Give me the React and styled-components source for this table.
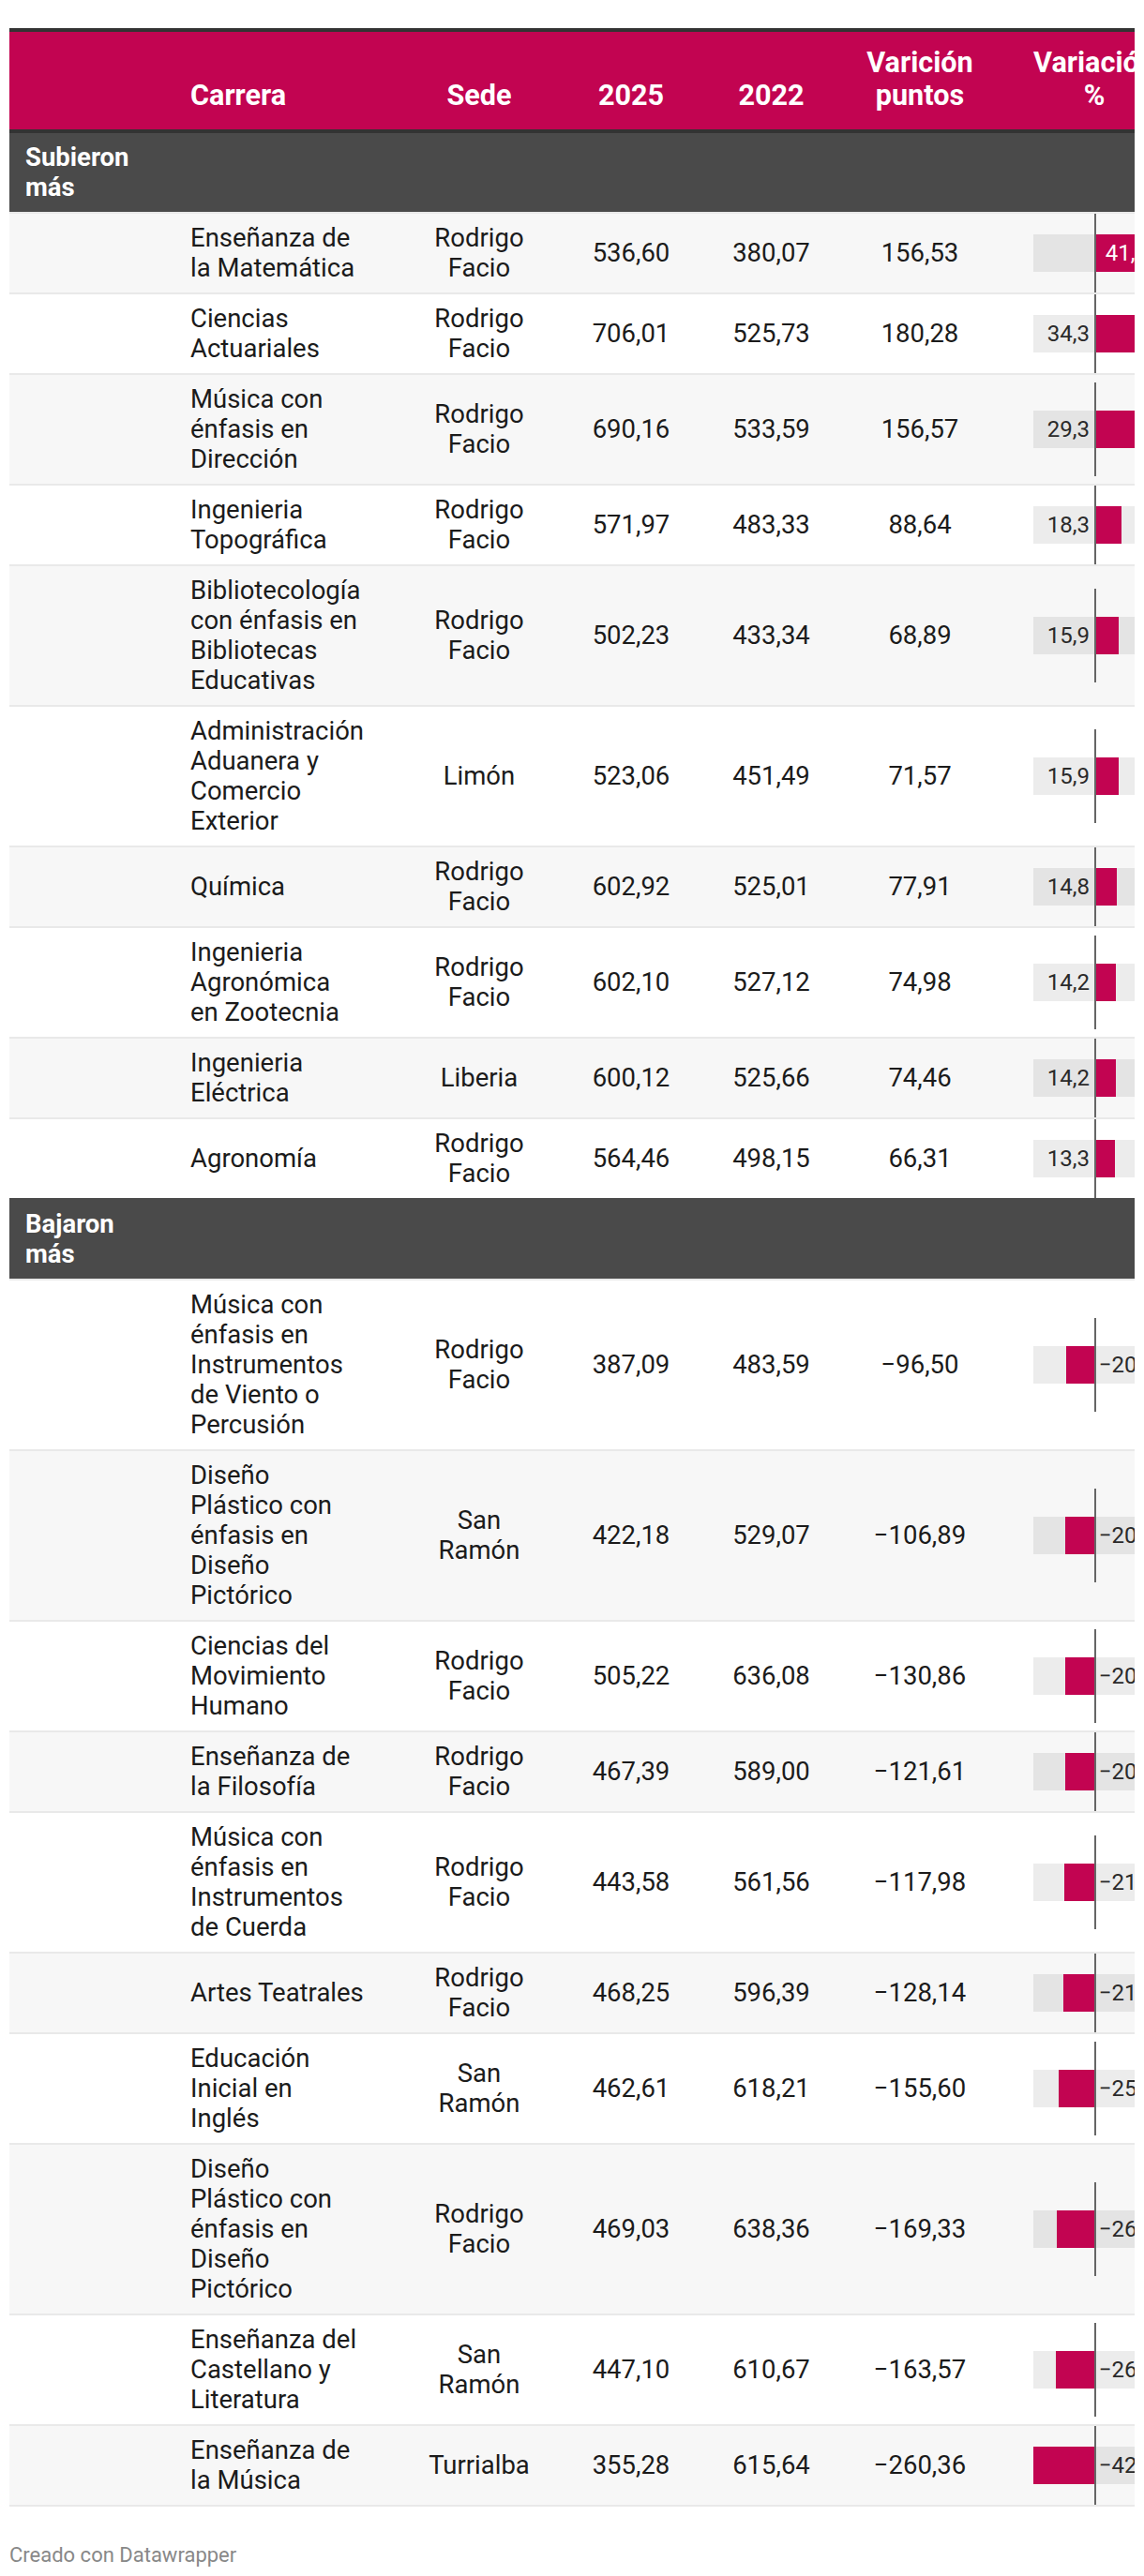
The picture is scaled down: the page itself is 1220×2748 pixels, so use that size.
import React from "react";
import styled, { createGlobalStyle } from "styled-components";

const GlobalStyle = createGlobalStyle`
  html, body { margin: 0; padding: 0; background: #ffffff; }
  body { font-family: Roboto, "Noto Sans", "Liberation Sans", sans-serif; color: #1d1d1d; }
`;

const PINK = "#c20451";
const SECTION = "#4a4a4a";
const STRIPE = "#f7f7f7";
const RULE = "#e9e9e9";

const MIN = -42.29;
const MAX = 41.18;
const RANGE = MAX - MIN;
const TRACK_W = 130;
const TRACK_PAD = 21;
const AXIS_PCT = ((0 - MIN) / RANGE) * 100;

const columns = [
  { w: 183, pad: "0 17px", align: "left" },
  { w: 247, pad: "0 50px 0 10px", align: "left" },
  { w: 142, pad: "0 6px", align: "center" },
  { w: 182, pad: "0 8px", align: "center" },
  { w: 117, pad: "0 4px", align: "center" },
  { w: 200, pad: "0 20px", align: "center" },
  { w: 172, pad: `0 ${TRACK_PAD}px`, align: "center" },
];

const subieron = [
  ["Enseñanza de la Matemática", "Rodrigo Facio", "536,60", "380,07", "156,53", 41.2],
  ["Ciencias Actuariales", "Rodrigo Facio", "706,01", "525,73", "180,28", 34.3],
  ["Música con énfasis en Dirección", "Rodrigo Facio", "690,16", "533,59", "156,57", 29.3],
  ["Ingenieria Topográfica", "Rodrigo Facio", "571,97", "483,33", "88,64", 18.3],
  ["Bibliotecología con énfasis en Bibliotecas Educativas", "Rodrigo Facio", "502,23", "433,34", "68,89", 15.9],
  ["Administración Aduanera y Comercio Exterior", "Limón", "523,06", "451,49", "71,57", 15.9],
  ["Química", "Rodrigo Facio", "602,92", "525,01", "77,91", 14.8],
  ["Ingenieria Agronómica en\u00A0Zootecnia", "Rodrigo Facio", "602,10", "527,12", "74,98", 14.2],
  ["Ingenieria Eléctrica", "Liberia", "600,12", "525,66", "74,46", 14.2],
  ["Agronomía", "Rodrigo Facio", "564,46", "498,15", "66,31", 13.3],
];

const bajaron = [
  ["Música con énfasis en Instrumentos de Viento o Percusión", "Rodrigo Facio", "387,09", "483,59", "−96,50", -20.0],
  ["Diseño Plástico con énfasis en Diseño Pictórico", "San Ramón", "422,18", "529,07", "−106,89", -20.2],
  ["Ciencias del Movimiento Humano", "Rodrigo Facio", "505,22", "636,08", "−130,86", -20.6],
  ["Enseñanza de la Filosofía", "Rodrigo Facio", "467,39", "589,00", "−121,61", -20.6],
  ["Música con énfasis en Instrumentos de Cuerda", "Rodrigo Facio", "443,58", "561,56", "−117,98", -21.0],
  ["Artes Teatrales", "Rodrigo Facio", "468,25", "596,39", "−128,14", -21.5],
  ["Educación Inicial en Inglés", "San Ramón", "462,61", "618,21", "−155,60", -25.2],
  ["Diseño Plástico con énfasis en Diseño Pictórico", "Rodrigo Facio", "469,03", "638,36", "−169,33", -26.5],
  ["Enseñanza del Castellano y Literatura", "San Ramón", "447,10", "610,67", "−163,57", -26.8],
  ["Enseñanza de la Música", "Turrialba", "355,28", "615,64", "−260,36", -42.3],
];

const Page = styled.div`
  padding: 30px 10px 0;
`;

const Frame = styled.div`
  width: 1200px;
  overflow: hidden;
`;

const Table = styled.table`
  width: 1243px;
  table-layout: fixed;
  border-collapse: separate;
  border-spacing: 0;
  font-size: 27.5px;
  line-height: 32px;
`;

const HeadCell = styled.th`
  background: ${PINK};
  color: #ffffff;
  font-weight: 700;
  font-size: 30.6px;
  line-height: 35px;
  text-align: ${(p) => p.$align};
  vertical-align: bottom;
  padding: ${(p) => p.$pad};
  padding-top: 15px;
  padding-bottom: 19px;
  border-top: 4px solid #333333;
  border-bottom: 4px solid #333333;
`;

const SectionCell = styled.td`
  background: ${SECTION};
  color: #ffffff;
  font-weight: 700;
  padding: 10px 17px;
  vertical-align: top;
  border-bottom: 2px solid ${RULE};
`;

const Cell = styled.td`
  background: ${(p) => (p.$stripe ? STRIPE : "#ffffff")};
  text-align: ${(p) => p.$align};
  vertical-align: middle;
  padding: ${(p) => p.$pad};
  padding-top: 10px;
  padding-bottom: 10px;
  border-bottom: 2px solid ${(p) => p.$rule};
  color: #1b1b1b;
`;

const BarCell = styled(Cell)`
  position: relative;
`;

const Axis = styled.div`
  position: absolute;
  top: 50%;
  transform: translateY(-50%);
  height: 100%;
  max-height: 100px;
  width: 2px;
  background: #666666;
  z-index: 2;
`;

const Track = styled.div`
  position: relative;
  height: 40px;
  background: rgba(0, 0, 0, 0.075);
`;

const Bar = styled.div`
  position: absolute;
  top: 0;
  bottom: 0;
  background: ${PINK};
`;

const BarLabel = styled.span`
  position: absolute;
  top: 0;
  font-size: 24px;
  line-height: 40px;
  white-space: nowrap;
  color: ${(p) => (p.$inside ? "#ffffff" : "#2a2a2a")};
  z-index: 3;
`;

const Footer = styled.div`
  margin-top: 39px;
  font-size: 22px;
  line-height: 26px;
  color: #888888;
`;

const fmt = (v) => {
  const s = Math.abs(v).toFixed(1).replace(".", ",");
  return v < 0 ? "−" + s : s;
};

function VariationBar({ value, stripe, rule }) {
  const widthPct = (Math.abs(value) / RANGE) * 100;
  const leftPct = value < 0 ? AXIS_PCT - widthPct : AXIS_PCT;
  const barPx = (Math.abs(value) / RANGE) * TRACK_W;
  const label = fmt(value);
  const labelPx = label.length * 11.5;
  const inside = value > 0 && barPx > labelPx + 14;
  let labelStyle;
  if (value < 0) {
    labelStyle = { left: `calc(${AXIS_PCT}% + 4px)` };
  } else if (inside) {
    labelStyle = { right: `calc(${100 - AXIS_PCT - widthPct}% + 8px)` };
  } else {
    labelStyle = { right: `calc(${100 - AXIS_PCT}% + 6px)` };
  }
  const axisLeft = TRACK_PAD + (TRACK_W * AXIS_PCT) / 100 - 1;
  return (
    <BarCell $stripe={stripe} $rule={rule} $align="left" $pad={columns[6].pad}>
      <Axis style={{ left: `${axisLeft}px` }} />
      <Track>
        <Bar style={{ left: `${leftPct}%`, width: `${widthPct}%` }} />
        <BarLabel $inside={inside} style={labelStyle}>
          {label}
        </BarLabel>
      </Track>
    </BarCell>
  );
}

function DataRow({ row, stripe, rule }) {
  const [carrera, sede, y25, y22, pts, pct] = row;
  return (
    <tr>
      <Cell $stripe={stripe} $rule={rule} $align="left" $pad={columns[0].pad} />
      <Cell $stripe={stripe} $rule={rule} $align="left" $pad={columns[1].pad}>
        {carrera}
      </Cell>
      <Cell $stripe={stripe} $rule={rule} $align="center" $pad={columns[2].pad}>
        {sede}
      </Cell>
      <Cell $stripe={stripe} $rule={rule} $align="center" $pad={columns[3].pad}>
        {y25}
      </Cell>
      <Cell $stripe={stripe} $rule={rule} $align="center" $pad={columns[4].pad}>
        {y22}
      </Cell>
      <Cell $stripe={stripe} $rule={rule} $align="center" $pad={columns[5].pad}>
        {pts}
      </Cell>
      <VariationBar value={pct} stripe={stripe} rule={rule} />
    </tr>
  );
}

function SectionRow({ title }) {
  return (
    <tr>
      <SectionCell>{title}</SectionCell>
      <SectionCell colSpan={6} />
    </tr>
  );
}

const headers = ["", "Carrera", "Sede", "2025", "2022", "Varición puntos", "Variación %"];

export default function App() {
  const body = [];
  let child = 0;
  const sections = [
    ["Subieron más", subieron],
    ["Bajaron más", bajaron],
  ];
  sections.forEach(([title, rows], si) => {
    child += 1;
    body.push(<SectionRow key={`s${si}`} title={title} />);
    rows.forEach((row, ri) => {
      child += 1;
      const beforeSection = si === 0 && ri === rows.length - 1;
      body.push(
        <DataRow
          key={`r${si}-${ri}`}
          row={row}
          stripe={child % 2 === 0}
          rule={beforeSection ? SECTION : RULE}
        />
      );
    });
  });

  return (
    <Page>
      <GlobalStyle />
      <Frame>
        <Table>
          <colgroup>
            {columns.map((c, i) => (
              <col key={i} style={{ width: `${c.w}px` }} />
            ))}
          </colgroup>
          <thead>
            <tr>
              {headers.map((h, i) => (
                <HeadCell
                  key={i}
                  $align={i === 1 ? "left" : "center"}
                  $pad={i === 6 ? "0 20px" : columns[i].pad}
                >
                  {h}
                </HeadCell>
              ))}
            </tr>
          </thead>
          <tbody>{body}</tbody>
        </Table>
      </Frame>
      <Footer>Creado con Datawrapper</Footer>
    </Page>
  );
}
